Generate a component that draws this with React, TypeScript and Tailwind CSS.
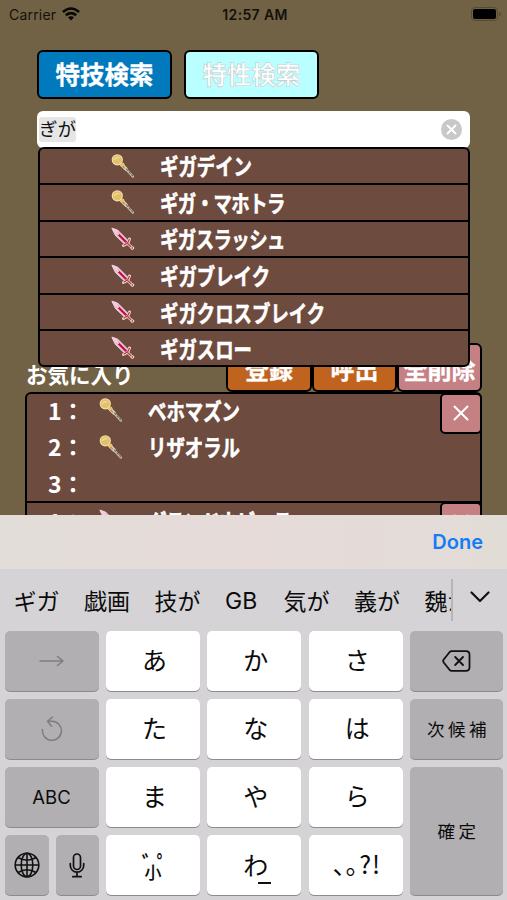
import type { ReactNode } from "react";

type Kind = "wand" | "sword";

function Wand() {
  return (
    <svg width="24" height="26" viewBox="0 0 24 26" fill="none" strokeLinecap="round">
      <path d="M9 10 L15 16" stroke="#ead9b0" strokeWidth="3.600" />
      <path d="M9 10 L15 16.500" stroke="#b98a3c" strokeWidth="1.600" />
      <path d="M14.500 15.500 L21.800 23.500" stroke="#cfc6b2" strokeWidth="2.400" />
      <path d="M15.500 16 L21.500 22.800" stroke="#6d6654" strokeWidth="1.100" strokeDasharray="2 1.800" />
      <circle cx="6.300" cy="6.800" r="5.600" fill="#f3e3b2" />
      <circle cx="6.300" cy="6.800" r="4.600" fill="#e2c06c" />
      <path d="M3.500 6.500 Q5 3.800 8 4.800" stroke="#f2dc97" strokeWidth="1.200" />
      <circle cx="11.500" cy="11.500" r="2" fill="#e6c26a" />
    </svg>
  );
}

function Sword() {
  return (
    <svg width="24" height="26" viewBox="0 0 24 26" fill="none" strokeLinecap="round" strokeLinejoin="round">
      <path d="M1.200 2.200 L6.500 4 L17 14.500 L13.500 18 L4.500 9.500 Z" fill="#f3c4d8" stroke="#fbe6ea" strokeWidth=".8" />
      <path d="M6 7 L15 16" stroke="#b81450" strokeWidth="2.400" />
      <path d="M2.800 3.800 L7 8" stroke="#f9c9e2" strokeWidth="2.400" />
      <path d="M18.500 13 L17 17 L12.500 19.500 M16.500 17.500 L21.500 22" stroke="#f4cfbd" strokeWidth="3" />
      <path d="M18.300 13.500 L16.700 16.800 L13 19 M17 18 L21 21.500" stroke="#a53e45" strokeWidth="1.200" />
      <circle cx="21.300" cy="22" r="1.400" fill="#a9474a" stroke="#f7d9ca" strokeWidth="1" />
    </svg>
  );
}

const Icon = ({ kind }: { kind: Kind }) => (kind === "wand" ? <Wand /> : <Sword />);

const results: { kind: Kind; name: string; tight?: boolean }[] = [
  { kind: "wand", name: "ギガデイン" },
  { kind: "wand", name: "ギガ・マホトラ", tight: true },
  { kind: "sword", name: "ギガスラッシュ", tight: true },
  { kind: "sword", name: "ギガブレイク" },
  { kind: "sword", name: "ギガクロスブレイク" },
  { kind: "sword", name: "ギガスロー" },
];

function SkillName({ children, tight }: { children: ReactNode; tight?: boolean }) {
  return (
    <span
      className={`inline-block origin-left scale-x-[0.8] whitespace-nowrap text-[23px] font-bold leading-none [-webkit-text-stroke:0.6px_white] ${tight ? "tracking-[-0.7px]" : ""}`}
    >
      {children}
    </span>
  );
}

function FavoriteRow({ n, kind, name, tight }: { n: number; kind?: Kind; name?: string; tight?: boolean }) {
  return (
    <div className="flex h-[36.500px] items-center pb-[3px] pl-[21px]">
      <span className="w-[51px] shrink-0 whitespace-nowrap text-[23px] font-bold leading-none">{n}：</span>
      <span className="w-[49px] shrink-0">{kind && <Icon kind={kind} />}</span>
      {name && <SkillName tight={tight}>{name}</SkillName>}
    </div>
  );
}

function DeleteButton() {
  return (
    <button className="absolute -top-px right-[-2px] flex h-[41.500px] w-[42px] items-center justify-center rounded-[5px] border-2 border-black bg-[#c58083]">
      <svg width="16" height="16" viewBox="0 0 16 16" stroke="white" strokeWidth="2" strokeLinecap="round">
        <path d="M1.500 1.500 L14.500 14.500 M14.500 1.500 L1.500 14.500" />
      </svg>
    </button>
  );
}

function Key({ children, dark, className = "" }: { children: ReactNode; dark?: boolean; className?: string }) {
  return (
    <button
      className={`flex items-center justify-center rounded-[5px] leading-none shadow-[0_1px_0_#8b8a8d] ${dark ? "bg-[#b1afb2]" : "bg-white pb-[3px] pl-[3px] text-[25px]"} ${className}`}
    >
      {children}
    </button>
  );
}

const candidates = ["ギガ", "戯画", "技が", "GB", "気が", "義が", "魏が"];

function Keyboard() {
  return (
    <section className="absolute inset-x-0 bottom-0 flex h-[385px] flex-col bg-[#d5d3d6] text-[#0b0b0c]">
      <div className="flex h-[54px] shrink-0 items-center justify-end bg-gradient-to-r from-[#e2ddd8] via-[#e6dbd9] to-[#e2dcd7] pr-[24px]">
        <span className="font-['Inter','Liberation_Sans',sans-serif] text-[20px] font-semibold text-[#147cf5]">Done</span>
      </div>
      <div className="flex h-[62px] shrink-0 items-center">
        <div className="flex h-[42px] w-[453px] items-center gap-[24.500px] overflow-hidden border-r-2 border-[#b6b4b8] pl-[13.500px] pt-px text-[23px] leading-none">
          {candidates.map((c) => (
            <span key={c} className={c === "GB" ? "w-[34px] shrink-0 pt-px font-['Inter',sans-serif]" : "shrink-0"}>
              {c}
            </span>
          ))}
        </div>
        <svg className="ml-[17px] -mt-[7px]" width="20" height="12" viewBox="0 0 20 12" fill="none" stroke="#111" strokeWidth="2.200" strokeLinecap="round" strokeLinejoin="round">
          <path d="M1.500 1.500 L10 10 L18.500 1.500" />
        </svg>
      </div>
      <div className="grid h-[264px] grid-cols-[94px_94px_94px_94px_93px] grid-rows-4 gap-x-[7.400px] gap-y-2 pl-[4.500px]">
        <Key dark>
          <svg width="25" height="12" viewBox="0 0 25 12" fill="none" stroke="#7e7d80" strokeWidth="1.500" strokeLinecap="round" strokeLinejoin="round">
            <path d="M1 6 H24 M18.500 1.500 L24 6 L18.500 10.500" />
          </svg>
        </Key>
        <Key>あ</Key>
        <Key>か</Key>
        <Key>さ</Key>
        <Key dark>
          <svg width="29" height="22" viewBox="0 0 29 22" fill="none" stroke="#111" strokeWidth="1.800" strokeLinecap="round" strokeLinejoin="round">
            <path d="M9.500 1.200 H24 Q27.500 1.200 27.500 4.700 V17.300 Q27.500 20.800 24 20.800 H9.500 Q8.500 20.800 7.700 20 L1.700 12.500 Q.7 11 1.700 9.500 L7.700 2 Q8.500 1.200 9.500 1.200 Z M13.200 7 L21 15 M21 7 L13.200 15" />
          </svg>
        </Key>

        <Key dark>
          <svg width="22" height="26" viewBox="0 0 22 26" fill="none" stroke="#7e7d80" strokeWidth="1.500" strokeLinecap="round" strokeLinejoin="round">
            <path d="M1.500 13.500 A9.500 9.500 0 1 0 11 5.200 L6.500 5.200 M11.500 1 L6.500 5.200 L10.500 10.200" />
          </svg>
        </Key>
        <Key>た</Key>
        <Key>な</Key>
        <Key>は</Key>
        <Key dark className="pb-px pl-[4px] text-[17.500px] tracking-[3.500px]">次候補</Key>

        <Key dark className="font-['Inter',sans-serif] text-[18.500px]">ABC</Key>
        <Key>ま</Key>
        <Key>や</Key>
        <Key>ら</Key>
        <Key dark className="row-span-2 pb-px pl-[4px] text-[17.500px] tracking-[3.500px]">確定</Key>

        <div className="grid grid-cols-[44px_42.500px] gap-x-[7.500px]">
          <Key dark>
            <svg width="26" height="26" viewBox="0 0 26 26" fill="none" stroke="#111" strokeWidth="1.600">
              <circle cx="13" cy="13" r="11.800" />
              <ellipse cx="13" cy="13" rx="5.800" ry="11.800" />
              <path d="M13 1 V25 M1 13 H25 M4 5.500 Q13 11 22 5.500 M4 20.500 Q13 15 22 20.500" />
            </svg>
          </Key>
          <Key dark>
            <svg width="16" height="25" viewBox="0 0 16 25" fill="none" stroke="#111" strokeWidth="1.700" strokeLinecap="round">
              <rect x="4.500" y="1" width="7" height="15.500" rx="3.500" />
              <path d="M1.300 10.500 V12.500 A6.700 6.700 0 0 0 14.700 12.500 V10.500 M8 19.500 V23.500 M3.800 23.700 H12.200" />
            </svg>
          </Key>
        </div>
        <Key>
          <span className="flex items-start font-medium">
            <span className="w-[8px] pt-[5px] text-[24px] leading-none">ﾞ</span>
            <span className="-mx-[5px] pt-[16px] text-[17px] leading-none">小</span>
            <span className="w-[11px] pt-[5px] text-[24px] leading-none">ﾟ</span>
          </span>
        </Key>
        <Key>
          <span className="flex flex-col items-center gap-[5px] pt-[9px]">
            わ
            <span className="ml-[17px] h-[1.500px] w-[13px] bg-[#111]" />
          </span>
        </Key>
        <Key>
          <span className="flex items-center whitespace-nowrap">
            <span className="pr-px">､｡</span>
            <span className="tracking-[1px]">?!</span>
          </span>
        </Key>
      </div>
    </section>
  );
}

export default function App() {
  return (
    <main className="relative h-[900px] w-[507px] overflow-hidden bg-[#716245] font-['Noto_Sans_CJK_JP',sans-serif] text-white">
      <header className="grid h-[28px] grid-cols-3 items-center pl-[9px] pr-[6px] font-['Inter','Liberation_Sans',sans-serif] text-[14px] text-[#14110b]">
        <div className="flex items-center gap-[6px] tracking-[0.200px]">
          Carrier
          <svg width="18" height="14" viewBox="0 0 18 14" fill="none" stroke="#090805" strokeWidth="2.600">
            <path d="M.9 5 Q9 -2 17.100 5" />
            <path d="M3.800 8.300 Q9 4 14.200 8.300" />
            <path d="M6 10.300 Q9 8 12 10.300 L9 13.500 Z" fill="#090805" stroke="none" />
          </svg>
        </div>
        <div className="whitespace-nowrap text-center font-semibold tracking-[0.350px]">12:57 AM</div>
        <div className="flex items-center justify-end gap-px">
          <div className="h-[14px] w-[27px] rounded-[4px] border border-[#554b34] p-px">
            <div className="h-full rounded-[2px] bg-black" />
          </div>
          <div className="h-1 w-[2px] rounded-r bg-[#554b34]" />
        </div>
      </header>

      <div className="flex gap-3 pl-[37px] pt-[21.500px] text-[24.500px] font-bold leading-none">
        <button className="h-[49px] w-[135px] rounded-[6px] border-[2.500px] border-black bg-[#0079bd] [-webkit-text-stroke:0.3px_white]">特技検索</button>
        <button className="h-[49px] w-[135px] rounded-[6px] border-[2.500px] border-black bg-[#b9ffff] [-webkit-text-stroke:0.6px_#c5cbcc]">特性検索</button>
      </div>

      <div className="relative ml-[37px] mt-[12px] w-[433px]">
        <div className="flex h-[37px] items-center justify-between rounded-[6px] bg-white pl-[2px] pr-[8px]">
          <span className="rounded-[3px] bg-[#e6e6e6] pb-[4px] pt-[2px] text-[18.500px] leading-[19px] text-[#111]">ぎが</span>
          <svg width="21" height="21" viewBox="0 0 21 21">
            <circle cx="10.500" cy="10.500" r="10.500" fill="#c8c8c8" />
            <path d="M6.500 6.500 L14.500 14.500 M14.500 6.500 L6.500 14.500" stroke="white" strokeWidth="2" strokeLinecap="round" />
          </svg>
        </div>
        <ul className="absolute left-[1px] top-[36px] z-10 grid w-[432px] grid-rows-[repeat(5,36.600px)_34px] divide-y-2 divide-black overflow-hidden rounded-[6px] border-2 border-black bg-[#6e4b3f]">
          {results.map(({ kind, name, tight }) => (
            <li key={name} className="flex items-center pl-[71px]">
              <span className="w-[49px] shrink-0">
                <Icon kind={kind} />
              </span>
              <SkillName tight={tight}>{name}</SkillName>
            </li>
          ))}
        </ul>
      </div>

      <div className="ml-[25px] mt-[195px] w-[457px]">
        <div className="flex h-[49px] items-start justify-between">
          <h2 className="pt-[20px] pl-px text-[21.500px] font-bold leading-none">お気に入り</h2>
          <div className="flex text-[24px] font-bold leading-none [-webkit-text-stroke:0.3px_white]">
            <button className="h-[49px] w-[86px] rounded-[6px] border-[2.500px] border-black bg-[#bf631e] pt-[3px]">登録</button>
            <button className="h-[49px] w-[85px] rounded-[6px] border-[2.500px] border-black bg-[#bf631e] pt-[3px]">呼出</button>
            <button className="h-[49px] w-[85px] whitespace-nowrap rounded-[6px] border-[2.500px] border-black bg-[#c58083] pt-[3px]">全削除</button>
          </div>
        </div>
        <div className="divide-y-2 divide-black rounded-[6px] border-2 border-black bg-[#6e4b3f]">
          <div className="relative h-[109px]">
            <FavoriteRow n={1} kind="wand" name="ベホマズン" />
            <FavoriteRow n={2} kind="wand" name="リザオラル" />
            <FavoriteRow n={3} />
            <DeleteButton />
          </div>
          <div className="relative h-[109px] pt-[2px]">
            <FavoriteRow n={1} kind="sword" name="グランドネビュラ" tight />
            <DeleteButton />
          </div>
        </div>
      </div>

      <Keyboard />
    </main>
  );
}
